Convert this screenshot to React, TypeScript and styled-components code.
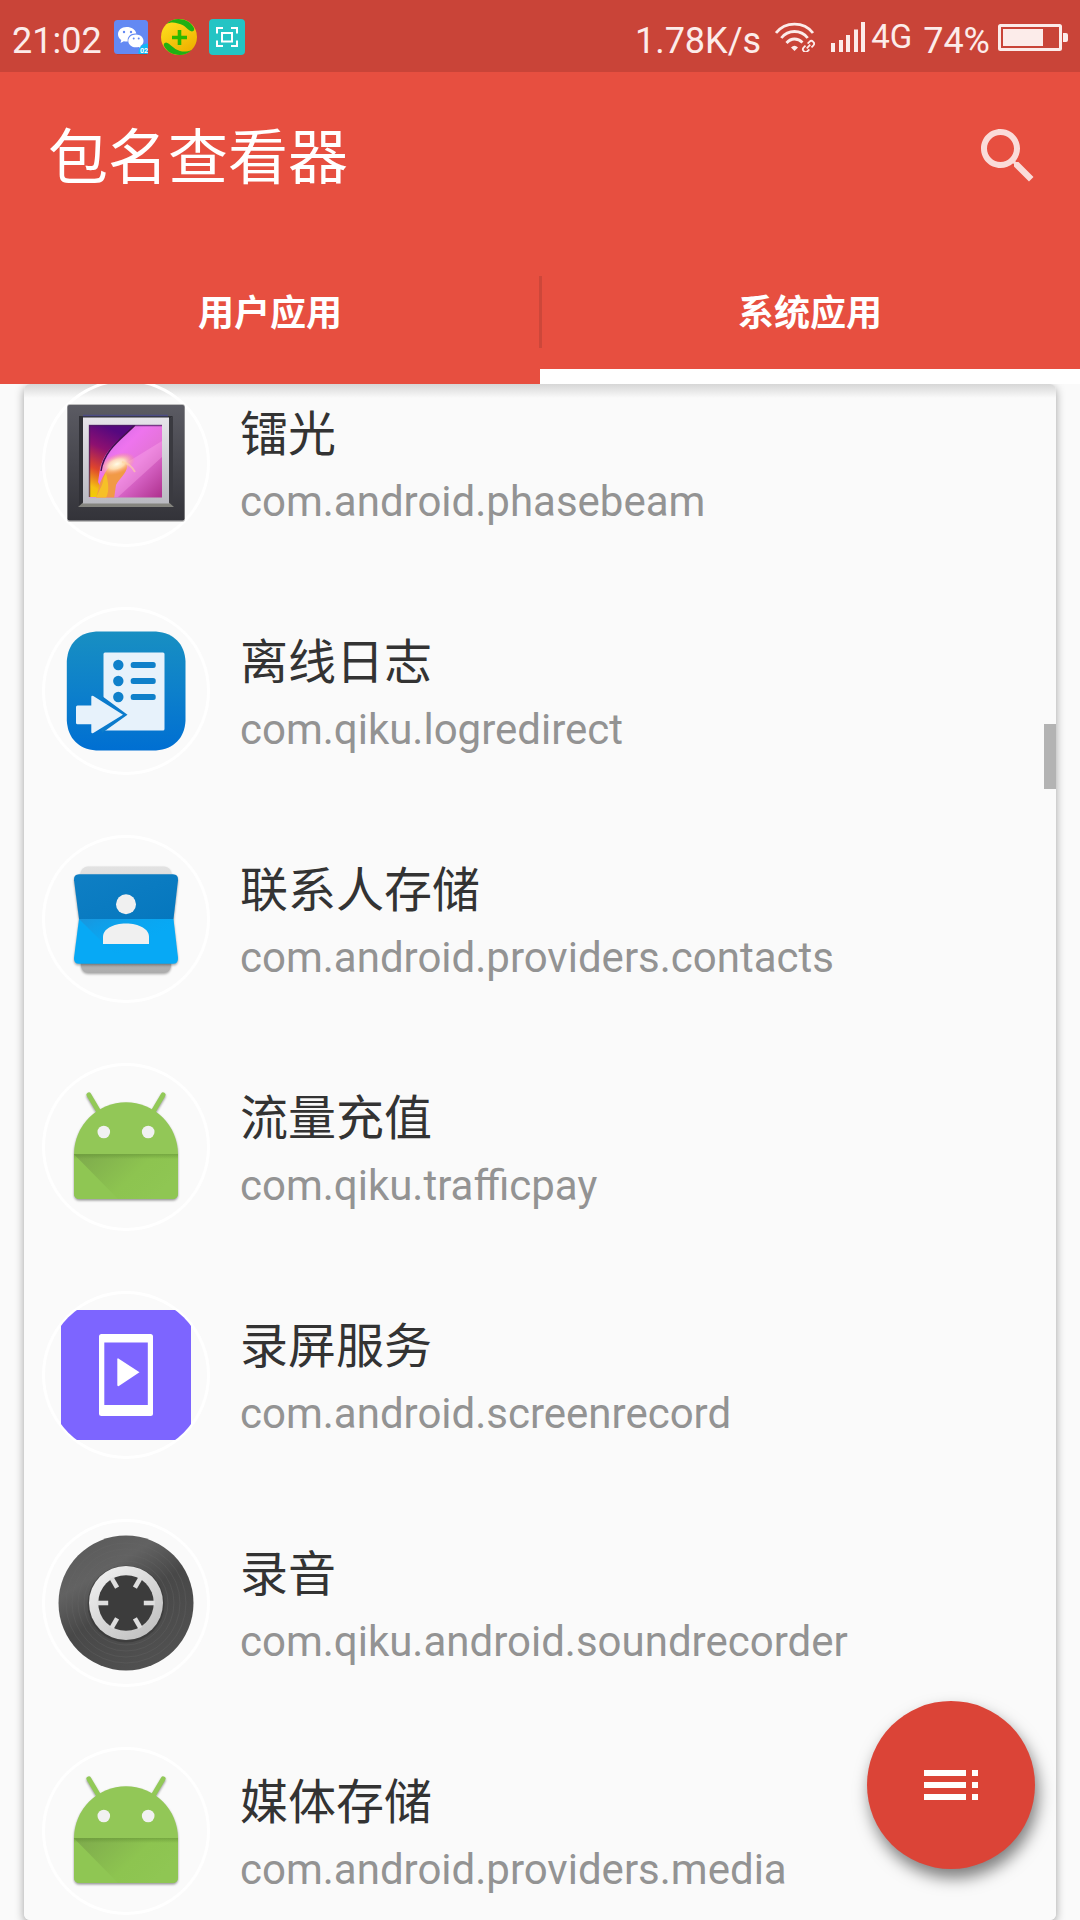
import React, { useState } from "react";
import styled, { createGlobalStyle } from "styled-components";

const GlobalStyle = createGlobalStyle`
  *, *::before, *::after { box-sizing: border-box; }
  body {
    margin: 0;
    background: #fafafa;
    font-family: Roboto, "Noto Sans CJK SC", sans-serif;
  }
  button { font-family: inherit; border: 0; padding: 0; background: none; cursor: pointer; }
`;

const Screen = styled.div`
  display: flex;
  flex-direction: column;
  height: 100vh;
  overflow: hidden;
`;

const StatusBar = styled.div`
  display: flex;
  align-items: center;
  justify-content: space-between;
  flex: none;
  height: 72px;
  padding: 2px 12px 0 12px;
  background: #c94438;
  color: #fcecea;
`;

const StatusGroup = styled.div<{ $gap: number }>`
  display: flex;
  align-items: center;
  gap: ${(p) => p.$gap}px;
`;

const Signals = styled(StatusGroup)`
  padding-left: 6px;
`;

const StatusText = styled.span`
  padding-top: 7px;
  font-size: 36px;
  line-height: 42px;
  white-space: nowrap;
`;

const NetworkType = styled.span`
  font-size: 33px;
  line-height: 40px;
  margin: 0 3px 0 -2px;
`;

const Header = styled.header`
  position: relative;
  z-index: 1;
  flex: none;
  background: #e74f40;
  color: #fff;
`;

const Toolbar = styled.div`
  display: flex;
  align-items: center;
  justify-content: space-between;
  height: 168px;
  padding: 0 36px 0 48px;
`;

const Title = styled.h1`
  margin: 0;
  padding-top: 5px;
  font-size: 60px;
  font-weight: 400;
  line-height: 84px;
`;

const SearchButton = styled.button`
  display: flex;
  color: #fadcd9;
`;

const Tabs = styled.div`
  display: flex;
`;

const Tab = styled.button<{ $active: boolean }>`
  position: relative;
  flex: 1;
  height: 144px;
  padding-top: 18px;
  border-bottom: 15px solid ${(p) => (p.$active ? "#fff" : "transparent")};
  color: #fff;
  font-size: 36px;
  font-weight: 700;
  line-height: 48px;

  &:not(:first-child)::before {
    content: "";
    position: absolute;
    left: -1px;
    top: 36px;
    width: 3px;
    height: 72px;
    background: #cd473a;
  }
`;

const Card = styled.main`
  position: relative;
  flex: 1;
  min-height: 0;
  margin: 0 24px;
  overflow: hidden;
  border-radius: 6px;
  background: #fafafa linear-gradient(#d6d6d6, #fafafa) top / 100% 14px no-repeat;
`;

const CardArea = styled.div`
  position: relative;
  display: flex;
  flex: 1;
  min-height: 0;
  flex-direction: column;

  &::before {
    content: "";
    position: absolute;
    inset: 0 24px;
    border-radius: 6px;
    box-shadow: 0 3px 10px rgba(0, 0, 0, 0.36);
  }
`;

const AppList = styled.ul`
  margin: -35px 0 0;
  padding: 0;
  list-style: none;
`;

const AppRow = styled.li`
  display: flex;
  align-items: center;
  gap: 30px;
  height: 228px;
  padding: 0 18px;
`;

const Avatar = styled.svg`
  flex: none;
  width: 168px;
  height: 168px;
`;

const AppText = styled.div`
  min-width: 0;
  padding-top: 5px;
`;

const AppName = styled.div`
  color: #333;
  font-size: 48px;
  line-height: 72px;
`;

const PackageName = styled.div`
  color: #939393;
  font-size: 42px;
  line-height: 62px;
`;

const ScrollThumb = styled.div`
  position: absolute;
  top: 340px;
  right: 0;
  width: 12px;
  height: 65px;
  background: #b3b3b3;
`;

const Fab = styled.button`
  position: fixed;
  right: 45px;
  bottom: 51px;
  display: flex;
  align-items: center;
  justify-content: center;
  width: 168px;
  height: 168px;
  border-radius: 50%;
  background: #db4437;
  color: #fff;
  box-shadow: 3px 9px 16px rgba(0, 0, 0, 0.5);
`;

const GalleryIcon = () => (
  <>
    <defs>
      <linearGradient id="frame" x1="0" y1="0" x2="0" y2="1">
        <stop offset="0" stopColor="#5b5b63" />
        <stop offset="1" stopColor="#333339" />
      </linearGradient>
      <linearGradient id="mat" x1="0" y1="0" x2="0" y2="1">
        <stop offset="0" stopColor="#e6e4ea" />
        <stop offset="1" stopColor="#b9b9c0" />
      </linearGradient>
      <linearGradient id="petal" x1="0" y1="0" x2="1" y2="1">
        <stop offset="0" stopColor="#c060e0" />
        <stop offset="0.4" stopColor="#ee74ee" />
        <stop offset="0.6" stopColor="#e473d8" />
        <stop offset="1" stopColor="#ad308c" />
      </linearGradient>
      <linearGradient id="dusk" x1="0.3" y1="0" x2="0" y2="1">
        <stop offset="0" stopColor="#55087f" />
        <stop offset="0.3" stopColor="#8d1070" />
        <stop offset="0.6" stopColor="#e0452c" />
        <stop offset="0.85" stopColor="#f5c013" />
        <stop offset="1" stopColor="#f0d000" />
      </linearGradient>
      <radialGradient id="glow">
        <stop offset="0" stopColor="#fffbe8" />
        <stop offset="0.45" stopColor="#ffe2b8" stopOpacity="0.9" />
        <stop offset="1" stopColor="#ff9a70" stopOpacity="0" />
      </radialGradient>
      <clipPath id="photo"><rect x="47" y="46" width="73" height="72.500" /></clipPath>
    </defs>
    <rect x="25" y="25" width="118" height="118" rx="3" fill="#bdbdbd" />
    <rect x="25.500" y="26" width="117" height="115.500" rx="2" fill="url(#frame)" />
    <path d="M37 37h94l-5 4H41v84l-4 3z" fill="#303036" />
    <path d="M131 37v91l-5-4V41z" fill="#3a3a40" />
    <path d="M41 36.500h85" stroke="#4c4c85" strokeWidth="1.500" />
    <path d="M41 123.500h86l5 4.500H36z" fill="#85857f" />
    <rect x="41" y="38.500" width="86" height="86" fill="url(#mat)" />
    <g clipPath="url(#photo)">
      <rect x="47" y="46" width="73" height="73" fill="url(#petal)" />
      <path d="M120 62L84 84l-20 34h12l44-40z" fill="#ffb0ee" opacity="0.35" />
      <path d="M93 46C82 58 63 68 58 90l-2 13 8 15H47V46z" fill="url(#dusk)" />
      <path d="M58 104c8-20 18-25 26-20 4 8-6 14-10 22l-2 14H54z" fill="#f19a45" />
      <path d="M64 94c-4 6-2 10-6 16l-4 9h10c4-8 2-16 0-25z" fill="#f6c028" />
      <ellipse cx="75" cy="85" rx="19" ry="10" fill="url(#glow)" transform="rotate(-20 75 85)" />
      <path d="M80 83q8 1 13 10" stroke="#ffd5a0" strokeWidth="2" fill="none" opacity="0.6" />
      <path d="M93 46C82 58 62 70 59 92" stroke="#41104e" strokeWidth="1.500" fill="none" />
    </g>
    <path d="M47.500 118V46.500H120" stroke="#4a2060" strokeOpacity="0.7" strokeWidth="1.500" fill="none" />
  </>
);

const LogIcon = () => (
  <>
    <defs>
      <linearGradient id="log" x1="0" y1="0" x2="0" y2="1">
        <stop offset="0" stopColor="#188fc2" />
        <stop offset="0.5" stopColor="#0d80cb" />
        <stop offset="1" stopColor="#006fd2" />
      </linearGradient>
    </defs>
    <path d="M54 24.500C65 24.500 103 24.500 114 24.500C132 26 142.500 37 143.500 54C143.500 65 143.500 103 143.500 114C142.500 131 132 142 114 143.500C103 143.500 65 143.500 54 143.500C36 142 26 131 24.800 114C24.800 103 24.800 65 24.800 54C26 37 36 26 54 24.500Z" fill="url(#log)" />
    <rect x="61.500" y="45.500" width="61" height="78" rx="1.500" fill="#e7f2fb" />
    {[58, 74, 90].map((y) => (
      <g key={y} fill="#0f80ca">
        <circle cx="76.300" cy={y} r="5.200" />
        <rect x="88.700" y={y - 3} width="25" height="6" rx="2.500" />
      </g>
    ))}
    <path d="M60 89v8l-2 22 2 7 25.500-18.300z" fill="#0b7bcc" />
    <path d="M34 100q0-1.500 1.500-1.500H49.300V90q0-2 2-1L81 107.700 51.300 126q-2 1-2-1v-7.700H35.500q-1.500 0-1.500-1.500z" fill="#e7f2fb" />
  </>
);

const ContactsIcon = () => (
  <>
    <defs>
      <linearGradient id="back" x1="0" y1="0" x2="0" y2="1">
        <stop offset="0" stopColor="#e2e2e2" />
        <stop offset="0.5" stopColor="#d0d0d0" />
        <stop offset="1" stopColor="#adadad" />
      </linearGradient>
      <linearGradient id="fold" x1="0" y1="0" x2="1" y2="1">
        <stop offset="0" stopColor="#1a95dc" />
        <stop offset="0.6" stopColor="#08a6f2" stopOpacity="0" />
      </linearGradient>
      <linearGradient id="cover" x1="0" y1="0" x2="1" y2="1">
        <stop offset="0" stopColor="#0f7fc4" />
        <stop offset="1" stopColor="#0577be" />
      </linearGradient>
      <filter id="soft" x="-20%" y="-20%" width="140%" height="140%" colorInterpolationFilters="sRGB">
        <feDropShadow dx="0" dy="1.500" stdDeviation="1.200" floodOpacity="0.35" />
      </filter>
    </defs>
    <rect x="39" y="31.500" width="90" height="106" rx="7" fill="url(#back)" filter="url(#soft)" />
    <g filter="url(#soft)">
      <path d="M37 39.300h94q5.500 0 5 6L131.500 84H37L32 45.300q-.500-6 5-6z" fill="url(#cover)" />
      <path d="M37 84h94.500L136 122.700q.500 6-5 6H37q-5.500 0-5-6z" fill="#07a9f5" />
    </g>
    <path d="M37 84h94.500v2L129 128.700H82z" fill="url(#fold)" />
    <circle cx="84" cy="69.200" r="10" fill="#f0f0f0" />
    <path d="M61 109V102C61 94 71 88.500 84 88.500S107 94 107 102V109Z" fill="#f0f0f0" />
  </>
);

const RobotIcon = ({ uid }: { uid: string }) => (
  <>
    <defs>
      <linearGradient id={`shade-${uid}`} x1="0" y1="0" x2="1" y2="0.450">
        <stop offset="0" stopColor="#7da94c" />
        <stop offset="0.65" stopColor="#8dc450" />
        <stop offset="1" stopColor="#8cc34f" stopOpacity="0" />
      </linearGradient>
      <linearGradient id={`seam-${uid}`} x1="0" y1="0" x2="0" y2="1">
        <stop offset="0" stopColor="#5c8a30" stopOpacity="0.5" />
        <stop offset="1" stopColor="#5c8a30" stopOpacity="0" />
      </linearGradient>
      <filter id={`drop-${uid}`} x="-20%" y="-20%" width="140%" height="140%" colorInterpolationFilters="sRGB">
        <feDropShadow dx="0" dy="1.500" stdDeviation="1.200" floodOpacity="0.4" />
      </filter>
    </defs>
    <g filter={`url(#drop-${uid})`}>
      <path d="M46.800 31.800L57 49M121.200 31.800L111 49" stroke="#92c957" strokeWidth="4.800" strokeLinecap="round" />
      <path d="M32 91.300a52 52 0 0 1 104 0V130q0 6-6 6H38q-6 0-6-6z" fill="#92c757" />
    </g>
    <path d="M32 91.300h104V130q0 6-6 6H38q-6 0-6-6z" fill="#8fc653" />
    <path d="M32 91.300h104V130q0 6-6 6H76z" fill={`url(#shade-${uid})`} />
    <rect x="32" y="91" width="104" height="5" fill={`url(#seam-${uid})`} />
    <circle cx="61.800" cy="69" r="6.300" fill="#f1f1f1" />
    <circle cx="106.200" cy="69" r="6.300" fill="#f1f1f1" />
  </>
);

const ScreenRecordIcon = () => (
  <>
    <clipPath id="round"><circle cx="84" cy="84" r="81.500" /></clipPath>
    <rect x="19" y="19" width="130" height="130" fill="#7d65ff" clipPath="url(#round)" />
    <rect x="57" y="43" width="54" height="82" rx="2.500" fill="#fff" />
    <rect x="62.300" y="51.500" width="43.500" height="62.500" fill="#7d65ff" />
    <path d="M76 67.300L97.500 81.300 76.500 95.200q-1.200 0-1.200-1.500V68.500q0-1.200.700-1.200z" fill="#fff" />
  </>
);

const RecorderIcon = () => (
  <>
    <defs>
      <linearGradient id="disc" x1="0.200" y1="0" x2="0.800" y2="1">
        <stop offset="0" stopColor="#5a5a5a" />
        <stop offset="0.250" stopColor="#626262" />
        <stop offset="0.500" stopColor="#484848" />
        <stop offset="1" stopColor="#525252" />
      </linearGradient>
      <linearGradient id="hub" x1="0" y1="0" x2="0.800" y2="1">
        <stop offset="0" stopColor="#f5f5f5" />
        <stop offset="1" stopColor="#bfbfbf" />
      </linearGradient>
    </defs>
    <circle cx="84" cy="84" r="67.500" fill="url(#disc)" />
    {[42, 48, 54, 60].map((r) => (
      <circle key={r} cx="84" cy="84" r={r} fill="none" stroke="#666" strokeOpacity="0.35" />
    ))}
    <circle cx="84" cy="85" r="38.500" fill="#333" fillOpacity="0.55" />
    <circle cx="84" cy="84" r="37" fill="url(#hub)" />
    <circle cx="84" cy="84" r="27.800" fill="#3c3c3c" />
    {[0, 60, 120, 180, 240, 300].map((a) => (
      <rect key={a} x="101.800" y="81.700" width="11" height="4.600" fill="#dedede" transform={`rotate(${a} 84 84)`} />
    ))}
  </>
);

const apps = [
  { name: "镭光", pkg: "com.android.phasebeam", icon: <GalleryIcon /> },
  { name: "离线日志", pkg: "com.qiku.logredirect", icon: <LogIcon /> },
  { name: "联系人存储", pkg: "com.android.providers.contacts", icon: <ContactsIcon /> },
  { name: "流量充值", pkg: "com.qiku.trafficpay", icon: <RobotIcon uid="traffic" /> },
  { name: "录屏服务", pkg: "com.android.screenrecord", icon: <ScreenRecordIcon /> },
  { name: "录音", pkg: "com.qiku.android.soundrecorder", icon: <RecorderIcon /> },
  { name: "媒体存储", pkg: "com.android.providers.media", icon: <RobotIcon uid="media" /> },
];

const tabs = ["用户应用", "系统应用"];

const WeChatBadge = () => (
  <svg width="35" height="36" viewBox="0 0 35 36" aria-hidden="true">
    <path d="M3 33h30v2.500H3z" fill="#8d2f2a" opacity="0.5" />
    <rect x="0" y="1" width="34" height="34" rx="3.500" fill="#6389f3" />
    <path d="M12.500 8C7.500 8 4 11.200 4 15.200c0 2.500 1.300 4.500 3.300 5.800L6.500 24l3.300-1.800c1 .200 2 .400 3 .400h1C12.800 17.500 17 14 22.300 14.500 21.500 10.500 17.500 8 12.500 8z" fill="#fff" />
    <path d="M22 15.500c-4.300 0-7.700 2.800-7.700 6.400s3.400 6.400 7.700 6.400c.9 0 1.800-.1 2.600-.400l2.500 1.400-.700-2.300c2-1.200 3.100-3 3.100-5.100 0-3.600-3.300-6.400-7.500-6.400z" fill="#fff" />
    <g fill="#6389f3">
      <circle cx="10" cy="13" r="1.200" /><circle cx="17" cy="13" r="1.200" />
      <circle cx="19.700" cy="19.500" r="1" /><circle cx="24.700" cy="19.500" r="1" />
    </g>
    <path d="M34 24.500V35H24.500C24 29 28 24.500 34 24.500z" fill="#12b8f5" />
    <text x="26" y="34" fontSize="7" fontWeight="700" fill="#fff">02</text>
  </svg>
);

const ShieldBadge = () => (
  <svg width="36" height="36" viewBox="0 0 36 36" aria-hidden="true">
    <defs>
      <linearGradient id="gold" x1="0" y1="0" x2="0.600" y2="1">
        <stop offset="0" stopColor="#ffe521" />
        <stop offset="1" stopColor="#efb100" />
      </linearGradient>
    </defs>
    <circle cx="18" cy="18" r="18" fill="url(#gold)" />
    <path d="M5.500 5C13-3 28-1 33 9q1 3-2 3.500C27 12 25 6 17 4.500 12 3 9 3.500 5.500 5z" fill="#20b014" />
    <path d="M30.500 31C23 39 8 37 3 27q-1-3 2-3.500C9 24 12 30 19 32c4 1.200 8 .500 11.500-1z" fill="#20b014" />
    <path d="M18.500 11v15M11 18.500h15" stroke="#2cb800" strokeWidth="3.600" />
  </svg>
);

const CaptureBadge = () => (
  <svg width="36" height="36" viewBox="0 0 36 36" fill="none" stroke="#fff" strokeWidth="2" aria-hidden="true">
    <rect width="36" height="36" rx="4" fill="#24c4c4" stroke="none" />
    <path d="M8 14.500V9h6M22 9h6v5.500M28 21.500V27h-6M14 27H8v-5.500" />
    <rect x="13" y="14" width="10" height="8.500" />
  </svg>
);

const WifiIcon = () => (
  <svg width="40" height="30" viewBox="0 0 40 30" fill="none" stroke="currentColor" strokeWidth="2.800" aria-hidden="true">
    <path d="M1 11Q8 2.200 19.500 2.200T38 11" />
    <path d="M6.300 16Q11.500 9.500 19.500 9.500T32.700 16" />
    <path d="M11.500 21Q15 17 19.500 17q4.500 0 8 3.500" />
    <path d="M16 25.500q3.500-3.500 7 0L19.500 29z" fill="currentColor" stroke="none" />
    <g strokeWidth="1.800" transform="rotate(-45 33.500 24.500)">
      <path d="M32 21.800h-2.500a2.700 2.700 0 0 0 0 5.400H32M35 21.800h2.500a2.700 2.700 0 0 1 0 5.400H35M31 24.500h5" />
    </g>
  </svg>
);

const SignalIcon = () => (
  <svg width="34" height="30" viewBox="0 0 34 30" fill="currentColor" aria-hidden="true">
    <path d="M0 21h4v9H0zM8 18h4v12H8zM15 13h4v17h-4zM23 7.500h4V30h-4zM30 0h4v30h-4z" />
  </svg>
);

const BatteryIcon = () => (
  <svg width="70" height="30" viewBox="0 0 70 30" aria-hidden="true">
    <rect x="1.500" y="3.500" width="61" height="24" rx="1" fill="none" stroke="currentColor" strokeWidth="3" />
    <path d="M5 7h40v17H5zM65 11h3q2 0 2 2v5q0 2-2 2h-3z" fill="currentColor" />
  </svg>
);

export default function App() {
  const [active, setActive] = useState(1);

  return (
    <Screen>
      <GlobalStyle />
      <StatusBar>
        <StatusGroup $gap={12}>
          <StatusText>21:02</StatusText>
          <WeChatBadge />
          <ShieldBadge />
          <CaptureBadge />
        </StatusGroup>
        <StatusGroup $gap={8}>
          <StatusText>1.78K/s</StatusText>
          <Signals $gap={16}>
            <WifiIcon />
            <SignalIcon />
          </Signals>
          <NetworkType>4G</NetworkType>
          <StatusText>74%</StatusText>
          <BatteryIcon />
        </StatusGroup>
      </StatusBar>
      <Header>
        <Toolbar>
          <Title>包名查看器</Title>
          <SearchButton aria-label="搜索">
            <svg width="72" height="72" viewBox="0 0 24 24" fill="currentColor" aria-hidden="true">
              <path d="M15.500 14h-.790l-.280-.270C15.410 12.590 16 11.110 16 9.500 16 5.910 13.090 3 9.500 3S3 5.910 3 9.500 5.910 16 9.500 16c1.610 0 3.090-.590 4.230-1.570l.270.280v.790l5 4.990L20.490 19l-4.990-5zm-6 0C7.010 14 5 11.990 5 9.500S7.010 5 9.500 5 14 7.010 14 9.500 11.990 14 9.500 14z" />
            </svg>
          </SearchButton>
        </Toolbar>
        <Tabs role="tablist">
          {tabs.map((label, i) => (
            <Tab key={label} role="tab" aria-selected={i === active} $active={i === active} onClick={() => setActive(i)}>
              {label}
            </Tab>
          ))}
        </Tabs>
      </Header>
      <CardArea>
        <Card>
          <AppList>
            {apps.map((app) => (
              <AppRow key={app.pkg}>
                <Avatar viewBox="0 0 168 168" aria-hidden="true">
                  <circle cx="84" cy="84" r="82.500" fill="none" stroke="#fff" strokeWidth="3" />
                  {app.icon}
                </Avatar>
                <AppText>
                  <AppName>{app.name}</AppName>
                  <PackageName>{app.pkg}</PackageName>
                </AppText>
              </AppRow>
            ))}
          </AppList>
          <ScrollThumb />
        </Card>
      </CardArea>
      <Fab aria-label="排序">
        <svg width="72" height="72" viewBox="0 0 24 24" fill="currentColor" aria-hidden="true">
          <path d="M3 9h14V7H3v2zm0 4h14v-2H3v2zm0 4h14v-2H3v2zm16 0h2v-2h-2v2zm0-10v2h2V7h-2zm0 6h2v-2h-2v2z" />
        </svg>
      </Fab>
    </Screen>
  );
}
